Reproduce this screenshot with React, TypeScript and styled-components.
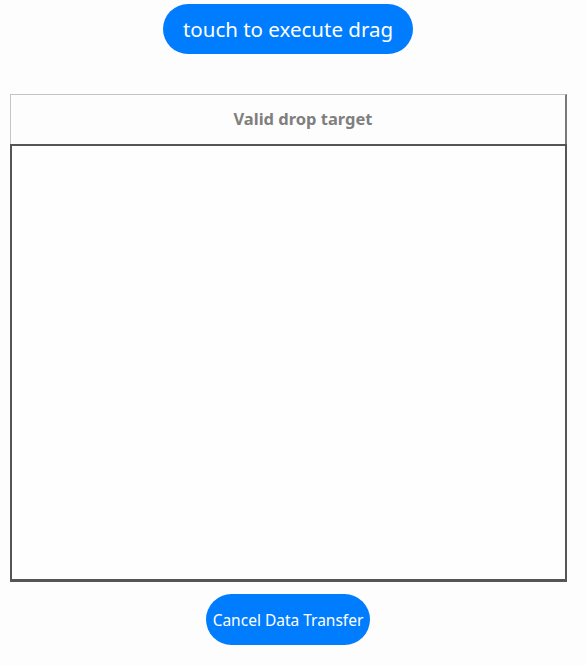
import React from "react";
import styled, { createGlobalStyle } from "styled-components";

const Global = createGlobalStyle`
  html, body { margin: 0; padding: 0; background: #fdfdfd; }
  body { font-family: "Noto Sans", "Open Sans", sans-serif; }
`;

const Page = styled.div`
  width: 576px;
  height: 665px;
  display: flex;
  flex-direction: column;
  align-items: center;
  padding-top: 4px;
  box-sizing: border-box;
`;

const PillButton = styled.button<{ $w: number; $h: number; $size: number }>`
  width: ${(p) => p.$w}px;
  height: ${(p) => p.$h}px;
  border: none;
  border-radius: 26px;
  background: #007dff;
  color: #ffffff;
  font-family: "Noto Sans", sans-serif;
  font-size: ${(p) => p.$size}px;
  padding: 0;
  display: flex;
  align-items: center;
  justify-content: center;
  flex-shrink: 0;
`;

const Target = styled.div`
  margin-top: 40px;
  align-self: flex-start;
  margin-left: 10px;
  width: 557px;
  display: flex;
  flex-direction: column;
`;

const Header = styled.div`
  height: 50px;
  box-sizing: border-box;
  border-top: 1px solid #c4c4c4;
  border-left: 1px solid #c4c4c4;
  border-right: 2px solid #7a7a7a;
  display: flex;
  align-items: center;
  justify-content: center;
  padding-left: 30px;
  padding-bottom: 3px;
  color: #7f7f7f;
  font-weight: 700;
  font-size: 16.5px;
`;

const DropArea = styled.div`
  height: 433px;
  border: 2px solid #555555;
  border-bottom-width: 3px;
  background: #fefefe;
`;

const Bottom = styled.div`
  margin-top: 12px;
`;

export default function App() {
  return (
    <Page>
      <Global />
      <PillButton $w={250} $h={50} $size={20.5}>touch to execute drag</PillButton>
      <Target>
        <Header>Valid drop target</Header>
        <DropArea />
      </Target>
      <Bottom>
        <PillButton $w={164} $h={51} $size={15.5}>Cancel Data Transfer</PillButton>
      </Bottom>
    </Page>
  );
}
